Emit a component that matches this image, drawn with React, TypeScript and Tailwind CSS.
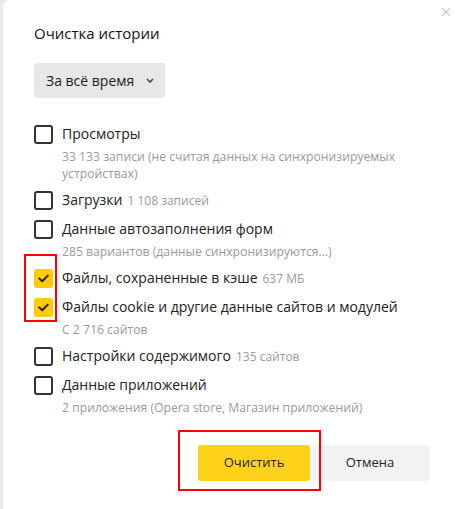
import { useState } from "react";

type Row = {
  id: string;
  label: string;
  extra?: string;
  sub?: string;
  checked: boolean;
};

const startRows: Row[] = [
  {
    id: "browsing",
    label: "Просмотры",
    sub: "33 133 записи (не считая данных на синхронизируемых устройствах)",
    checked: false,
  },
  { id: "downloads", label: "Загрузки", extra: "1 108 записей", checked: false },
  {
    id: "autofill",
    label: "Данные автозаполнения форм",
    sub: "285 вариантов (данные синхронизируются...)",
    checked: false,
  },
  { id: "cache", label: "Файлы, сохраненные в кэше", extra: "637 МБ", checked: true },
  {
    id: "cookies",
    label: "Файлы cookie и другие данные сайтов и модулей",
    sub: "С 2 716 сайтов",
    checked: true,
  },
  { id: "content", label: "Настройки содержимого", extra: "135 сайтов", checked: false },
  {
    id: "apps",
    label: "Данные приложений",
    sub: "2 приложения (Opera store, Магазин приложений)",
    checked: false,
  },
];

function Checkbox({ checked, onClick }: { checked: boolean; onClick: () => void }) {
  if (checked) {
    return (
      <button
        type="button"
        onClick={onClick}
        className="mt-[1px] flex h-[19px] w-[19px] shrink-0 items-center justify-center rounded-[3px] bg-[#ffcc00]"
      >
        <svg width="11" height="9" viewBox="0 0 11 9" fill="none">
          <path d="M1.2 4.4 L4.2 7.3 L9.8 1.6" stroke="#222" strokeWidth="2" strokeLinecap="round" strokeLinejoin="round" />
        </svg>
      </button>
    );
  }
  return (
    <button
      type="button"
      onClick={onClick}
      className="mt-[1px] h-[19px] w-[19px] shrink-0 rounded-[3px] border-2 border-[#333]"
    />
  );
}

export default function App() {
  const [rows, setRows] = useState(startRows);

  const toggle = (id: string) => {
    setRows((prev) => prev.map((r) => (r.id === id ? { ...r, checked: !r.checked } : r)));
  };

  return (
    <div className="flex h-[509px] w-[459px] bg-[#e9e9e9] font-['Open_Sans',sans-serif] text-[#222]">
      <div className="w-[3px] shrink-0" />
      <div className="relative flex-1 rounded-tl-[6px] bg-white pl-[31px]">
        <button type="button" className="absolute right-[8px] top-[7px] text-[#c8c8c8]">
          <svg width="10" height="10" viewBox="0 0 10 10">
            <path d="M1 1 L9 9 M9 1 L1 9" stroke="currentColor" strokeWidth="1.1" />
          </svg>
        </button>

        <h2 className="pt-[22px] text-[15px] leading-[22px] text-[#111]">Очистка истории</h2>

        <button
          type="button"
          className="mt-[19px] flex h-[35px] w-[131px] items-center rounded-[3px] bg-[#e6e7e6] pl-[12px] text-[14px] text-[#222]"
        >
          За всё время
          <svg className="ml-[12px]" width="8" height="5" viewBox="0 0 8 5">
            <path d="M1 1 L4 4 L7 1" stroke="#444" strokeWidth="1.6" fill="none" />
          </svg>
        </button>

        <div className="relative mt-[26px] flex flex-col gap-[8px]">
          <div className="pointer-events-none absolute left-[-10px] top-[130px] h-[68px] w-[33px] border-2 border-[#ff0000]" />
          {rows.map((r) => (
            <div key={r.id} className="flex gap-[9px]">
              <Checkbox checked={r.checked} onClick={() => toggle(r.id)} />
              <div className="w-[345px]">
                <div className="text-[14px] leading-[20px] whitespace-nowrap">
                  {r.label}
                  {r.extra && <span className="ml-[5px] text-[12px] text-[#9a9a9a]">{r.extra}</span>}
                </div>
                {r.sub && <div className="mt-[4px] text-[12.2px] leading-[17px] text-[#9a9a9a]">{r.sub}</div>}
              </div>
            </div>
          ))}
        </div>

        <div className="mt-[29px] flex justify-end pr-[29px]">
          <div className="flex">
            <div className="relative">
              <div className="pointer-events-none absolute left-[-20px] right-[-11px] top-[-15px] bottom-[-10px] border-2 border-[#ff0000]" />
              <button type="button" className="h-[36px] w-[112px] rounded-[3px] bg-[#fed21b] text-[13px] text-[#222]">
                Очистить
              </button>
            </div>
            <button type="button" className="h-[36px] w-[120px] rounded-[3px] bg-[#f2f2f2] text-[13px] text-[#222]">
              Отмена
            </button>
          </div>
        </div>
      </div>
    </div>
  );
}
